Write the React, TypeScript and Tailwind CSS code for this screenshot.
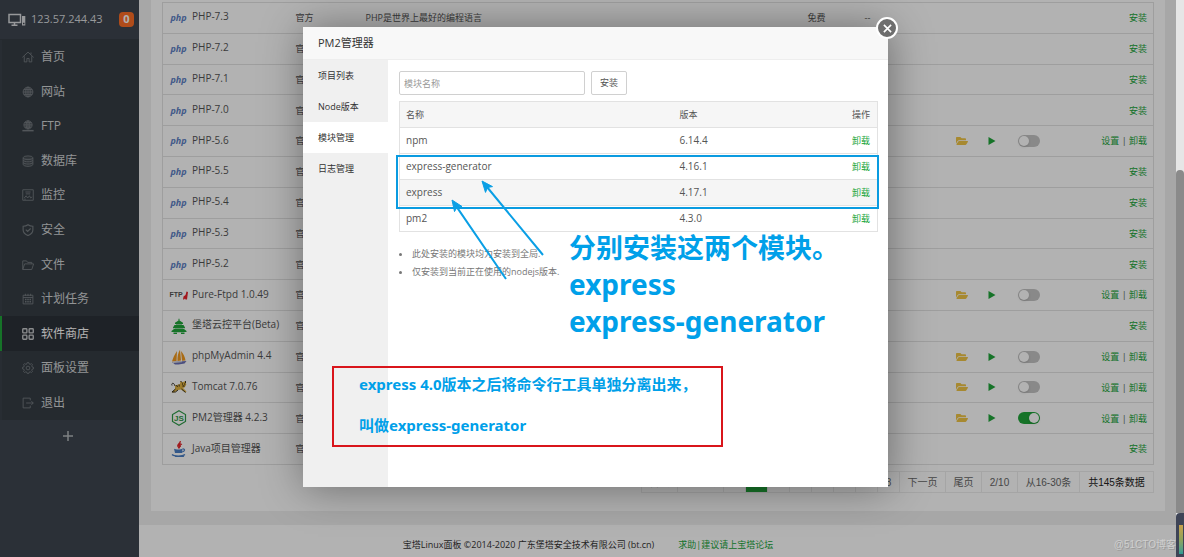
import type { ReactNode } from "react";
import { FaFolderOpen } from "react-icons/fa";

type IconName = "home" | "globe" | "ftp" | "db" | "monitor" | "shield" | "folder" | "calendar" | "apps" | "gear" | "exit";

const iconShapes: Record<IconName, ReactNode> = {
  home: <path d="M.5 8.500 8 1.500l7.500 7M3 7v7.500h3.500V10h3v4.500H13V7M12 4.500V2" />,
  globe: (
    <g>
      <circle cx="8" cy="8" r="6.500" fill="currentColor" fillOpacity=".25" />
      <ellipse cx="8" cy="8" rx="3" ry="6.500" />
      <path d="M1.500 8h13M8 1.500v13M2.500 4.700h11M2.500 11.300h11" />
    </g>
  ),
  ftp: (
    <g>
      <circle cx="8" cy="6.500" r="5.500" fill="currentColor" fillOpacity=".25" />
      <ellipse cx="8" cy="6.500" rx="2.500" ry="5.500" />
      <path d="M2.500 6.500h11M8 1v11M3.500 3.500h9M3.500 9.500h9" />
      <path d="M0.500 14.200h15" strokeWidth="2" />
    </g>
  ),
  db: (
    <g fill="currentColor" fillOpacity=".2">
      <path d="M1.500 4v8.500C2 16 14 16 14.500 12.500V4" />
      <ellipse cx="8" cy="3.700" rx="6.500" ry="2.500" />
      <path d="M1.500 7C3 9.700 13 9.700 14.500 7M1.500 10C3 12.700 13 12.700 14.500 10" fill="none" />
    </g>
  ),
  monitor: <path d="M1 1h14v14H1zM4.500 4h7M5 6.500h6M3 12l2.500-3 2 3L10 9l1.500 3 2-1.500M3 13.500h2" />,
  shield: <path d="M8 1c2 1.500 4 2 6.500 2v5c0 3.500-3 6-6.500 7.500C4.500 14 1.500 11.500 1.500 8V3C4 3 6 2.500 8 1zM5 7.500l2.500 2.500 4-4" strokeWidth="1.500" />,
  folder: <path d="M1 14V2.500h5L7.500 4.500H13V6.500M1 14 3.500 6.500h12L13 14z" />,
  calendar: (
    <g>
      <path d="M1.500 3h13v11.500h-13zM1.500 6h13M4.500 1v3M8 1v3M11.500 1v3" />
      <path d="M4 8.500h8M4 11.500h8" strokeDasharray="2 1" strokeWidth="2" />
    </g>
  ),
  apps: (
    <g strokeWidth="1.800">
      <rect x="1" y="1" width="5.500" height="5.500" rx="1" />
      <rect x="9.500" y="1" width="5.500" height="5.500" rx="1" />
      <rect x="1" y="9.500" width="5.500" height="5.500" rx="1" />
      <rect x="9.500" y="9.500" width="5.500" height="5.500" rx="1" />
    </g>
  ),
  gear: (
    <g>
      <path d="m6.700 1 .4-.3h1.800l.4 1.700 1.700.7 1.600-.9 1.300 1.300-.9 1.600.7 1.700 1.700.4v1.800l-1.700.4-.7 1.700.9 1.600-1.300 1.300-1.600-.9-1.700.7-.4 1.700H7.100l-.4-1.700-1.700-.7-1.600.9-1.300-1.300.9-1.600-.7-1.700-1.700-.4V7.200l1.700-.4.7-1.700-.9-1.600 1.300-1.300 1.600.9 1.700-.7z" />
      <circle cx="8" cy="8" r="2.500" />
    </g>
  ),
  exit: <path d="M11 4.500V1.500H1.500v13H11v-3M5.500 8H15M12.500 5.500 15 8l-2.500 2.500" />,
};

const menu: { label: string; icon: IconName }[] = [
  { label: "首页", icon: "home" },
  { label: "网站", icon: "globe" },
  { label: "FTP", icon: "ftp" },
  { label: "数据库", icon: "db" },
  { label: "监控", icon: "monitor" },
  { label: "安全", icon: "shield" },
  { label: "文件", icon: "folder" },
  { label: "计划任务", icon: "calendar" },
  { label: "软件商店", icon: "apps" },
  { label: "面板设置", icon: "gear" },
  { label: "退出", icon: "exit" },
];

function Sidebar() {
  return (
    <aside className="flex w-[139px] shrink-0 flex-col bg-[#3e454f]">
      <div className="flex h-[39px] items-center pl-2 pr-[5px] text-[#d8dadd]">
        <svg viewBox="0 0 18 14" className="h-[14px] w-[18px] shrink-0" fill="none" stroke="currentColor" strokeWidth="1.500">
          <path d="M1 1.500h11.500v8H1zM3.500 12.200h6" />
          <path d="M6.500 9.500v2.500" />
          <path d="M14 3h3.300v9.500H14z" fill="currentColor" stroke="none" />
          <path d="M15 10.500h1.500" stroke="#3e454f" />
        </svg>
        <span className="ml-[5px] text-[11px]">123.57.244.43</span>
        <span className="ml-auto flex h-[15px] w-[15px] items-center justify-center rounded bg-[#fc6d26] text-[11px] font-bold text-white">0</span>
      </div>
      <nav className="grid h-[381px] auto-rows-fr bg-[#353d44] pt-px">
        {menu.map((m) => {
          const active = m.icon === "apps";
          return (
            <a
              key={m.label}
              href="#"
              className={
                active
                  ? "flex items-center border-l-2 border-[#20a53a] bg-[#2c3138] pl-5 text-[12px] text-white"
                  : "flex items-center border-l-2 border-[#3a4149] pl-5 text-[12px] text-[#d2d4d6]"
              }
            >
              <svg
                viewBox="0 0 16 16"
                className={active ? "h-3 w-3 text-[#c8cacc]" : "h-3 w-3 text-[#767c81]"}
                fill="none"
                stroke="currentColor"
                strokeWidth="1.200"
              >
                {iconShapes[m.icon]}
              </svg>
              <span className="ml-[7px]">{m.label}</span>
            </a>
          );
        })}
      </nav>
      <button type="button" aria-label="添加" className="mt-[10px] flex justify-center pr-1 text-[#b4b8bc]">
        <svg viewBox="0 0 12 12" className="h-3 w-3" stroke="currentColor" strokeWidth="1.500">
          <path d="M6 1v10M1 6h10" />
        </svg>
      </button>
    </aside>
  );
}

type Kind = "php" | "ftp" | "tower" | "sail" | "cat" | "node" | "java";

function SoftIcon({ kind }: { kind: Kind }) {
  if (kind === "php") return <span className="text-[9px] font-bold italic text-[#5d7fc4]">php</span>;
  if (kind === "ftp")
    return (
      <span className="flex items-center font-['Liberation_Sans',sans-serif] text-[7px] font-bold leading-4 text-[#555]">
        FTP
        <svg viewBox="0 0 5 9" className="h-[9px] w-[5px] shrink-0" fill="#e8202a">
          <path d="M3.500.5 5 1 4 8.500H2.500L2 7.500l-1 1H0L.5 5.500 2.500 4z" />
        </svg>
      </span>
    );
  return (
    <svg viewBox="0 0 16 16" className="h-4 w-4" fill="none">
      {kind === "tower" && (
        <g fill="#20a53a">
          <path d="M7.500.8h1V2.500L12 4.700V6H4V4.700l3.500-2.200zM5 6.600h6v1H5zM3.500 7h9l1.500 2.500v.8H2v-.8zM4 10.800h8v.8H4zM3 11h10l2.500 2v1H.5v-1zM2.500 14.400h11V16H10v-1.200H6V16H2.500z" />
        </g>
      )}
      {kind === "sail" && (
        <g>
          <path d="M6 2C3.500 5.500 2 9 1 12.500L5.500 12zM9 .8C7 4 6.300 8 6.500 12l3.500-.5zM10 2c2.500 3 4 6 4.500 9.500l-3.500.3z" fill="#f29a1f" />
          <path d="M1 13 15.500 12 13.500 14.500l-6 1H4z" fill="#6b6fb5" />
          <path d="M2 13.500l9-.8" stroke="#ddd" />
        </g>
      )}
      {kind === "cat" && (
        <g>
          <path d="M4 6.500 9 5l.5-3 2 1.300L14.500 2l.8 3.500-1.500 2.800-1.800.7 3.500 3.500-1 1-4.500-3-3 .5-4 2.500-2.500-.3L4 10z" fill="#e0b23f" />
          <path d="M4 7C3 3 0 4 1 6.500M5.500 6l1 2M8 5.500l.3 2M4.500 10 1 13h3.500L7 11M10.500 10l4 3.500M9.500 2l1.500 1.500M14.500 2v2" stroke="#29251d" strokeWidth=".9" />
          <path d="M11 5h1M13.200 5h1M11.500 7h2" stroke="#111" />
        </g>
      )}
      {kind === "node" && (
        <g>
          <path d="M8 .8 14.500 4.500v7L8 15.200 1.500 11.500v-7z" stroke="#2f9a48" strokeWidth="1.200" />
          <text x="8" y="10.800" textAnchor="middle" fontSize="8" fill="#2f9a48" className="font-['Liberation_Sans',sans-serif] font-bold">
            JS
          </text>
        </g>
      )}
      {kind === "java" && (
        <g>
          <path d="M9 0c1.500 2-3.500 3-2 5.500L8 7C9.500 5.500 6.500 4.500 9.500 2M11 3C8.500 4 8.800 5 9.500 6" stroke="#e5252a" strokeWidth="1.300" />
          <path d="M3 7.800c2 1 6.500 1 8.500 0L11 12H4z" fill="#4a7fc4" />
          <path d="M11.500 8c3-.5 2.500 2.500-.5 3M1 13.500c2 2 10.500 2 13 0M4 15.500c3 .6 6 .6 9-.3" stroke="#4a7fc4" strokeWidth="1.200" />
        </g>
      )}
    </svg>
  );
}

const software: { name: string; kind: Kind; installed?: boolean; on?: boolean }[] = [
  { name: "PHP-7.3", kind: "php" },
  { name: "PHP-7.2", kind: "php" },
  { name: "PHP-7.1", kind: "php" },
  { name: "PHP-7.0", kind: "php" },
  { name: "PHP-5.6", kind: "php", installed: true },
  { name: "PHP-5.5", kind: "php" },
  { name: "PHP-5.4", kind: "php" },
  { name: "PHP-5.3", kind: "php" },
  { name: "PHP-5.2", kind: "php" },
  { name: "Pure-Ftpd 1.0.49", kind: "ftp", installed: true },
  { name: "堡塔云控平台(Beta)", kind: "tower" },
  { name: "phpMyAdmin 4.4", kind: "sail", installed: true },
  { name: "Tomcat 7.0.76", kind: "cat", installed: true },
  { name: "PM2管理器 4.2.3", kind: "node", installed: true, on: true },
  { name: "Java项目管理器", kind: "java" },
];

function SoftwareTable() {
  return (
    <table className="h-[463px] w-full table-fixed border-collapse border border-[#e2e2e2] text-[9px] text-[#555]">
      <colgroup>
        <col className="w-[133px]" />
        <col className="w-[70px]" />
        <col />
        <col className="w-[57px]" />
        <col className="w-[91px]" />
        <col className="w-[32px]" />
        <col className="w-[30px]" />
        <col className="w-[50px]" />
        <col className="w-[86px]" />
      </colgroup>
      <tbody>
        {software.map((s, i) => (
          <tr key={s.name} className="border-b border-[#e2e2e2]">
            <td className="p-0">
              <div className="flex items-center pl-[7px]">
                <span className="flex w-[17px] shrink-0 justify-center">
                  <SoftIcon kind={s.kind} />
                </span>
                <span className="ml-[5px] whitespace-nowrap pb-[3px] text-[10px] leading-4">{s.name}</span>
              </div>
            </td>
            <td className="p-0">官方</td>
            <td className="p-0">{i === 0 && "PHP是世界上最好的编程语言"}</td>
            <td className="p-0">{i === 0 && "免费"}</td>
            <td className="p-0">{i === 0 && "--"}</td>
            <td className="p-0">{s.installed && <FaFolderOpen className="h-3 w-3 text-[#efc445]" />}</td>
            <td className="p-0">
              {s.installed && (
                <svg viewBox="0 0 8 8" className="h-2 w-2" fill="#20a53a">
                  <path d="M0.500 0 7.500 4 .5 8z" />
                </svg>
              )}
            </td>
            <td className="p-0">
              {s.installed && (
                <button
                  type="button"
                  role="switch"
                  aria-checked={!!s.on}
                  aria-label={s.name}
                  className={
                    s.on
                      ? "flex h-3 w-[22px] items-center justify-end rounded-full bg-[#20a53a] px-px"
                      : "flex h-3 w-[22px] items-center rounded-full bg-[#c4c4c4] px-px"
                  }
                >
                  <span className="h-[10px] w-[10px] rounded-full bg-white shadow" />
                </button>
              )}
            </td>
            <td className="whitespace-nowrap p-0 pr-[6px] text-right text-[#555]">
              {s.installed ? (
                <>
                  <a href="#" className="text-[#20a53a]">设置</a> | <a href="#" className="text-[#20a53a]">卸载</a>
                </>
              ) : (
                <a href="#" className="text-[#20a53a]">安装</a>
              )}
            </td>
          </tr>
        ))}
      </tbody>
    </table>
  );
}

const pages: { text: string; width: string }[] = [
  { text: "首页", width: "w-[36px]" },
  { text: "上一页", width: "w-[46px]" },
  { text: "1", width: "w-[22px]" },
  { text: "2", width: "w-[22px]" },
  { text: "3", width: "w-[22px]" },
  { text: "4", width: "w-[22px]" },
  { text: "5", width: "w-[22px]" },
  { text: "6", width: "w-[22px]" },
  { text: "7", width: "w-[22px]" },
  { text: "8", width: "w-[22px]" },
  { text: "下一页", width: "w-[46px]" },
  { text: "尾页", width: "w-[36px]" },
  { text: "2/10", width: "w-[36px]" },
  { text: "从16-30条", width: "w-[62px]" },
  { text: "共145条数据", width: "w-[74px]" },
];

function Pagination() {
  return (
    <div className="mt-[6px] flex justify-end font-['Liberation_Sans','Noto_Sans_CJK_SC',sans-serif] text-[10px] text-[#666]">
      <div className="flex border-l border-[#ececec]">
        {pages.map((p) => (
          <span
            key={p.text}
            className={`${p.width} flex h-[22px] items-center justify-center border-y border-r border-[#ececec] ${
              p.text === "2" ? "bg-[#20a53a] text-white" : p.text.startsWith("共") ? "text-[#222]" : ""
            }`}
          >
            {p.text}
          </span>
        ))}
      </div>
    </div>
  );
}

const modules = [
  ["npm", "6.14.4"],
  ["express-generator", "4.16.1"],
  ["express", "4.17.1"],
  ["pm2", "4.3.0"],
];

function ManagerDialog() {
  return (
    <div role="dialog" aria-label="PM2管理器" className="relative flex h-[460px] w-[585px] flex-col bg-white text-[9px] text-[#555] shadow-[1px_1px_40px_rgba(0,0,0,0.4)]">
      <h2 className="flex h-[33px] items-center border-b border-[#eee] bg-[#f8f8f8] pl-[15px] text-[11px] text-[#333]">PM2管理器</h2>
      <button type="button" aria-label="关闭" className="absolute -right-[10px] -top-[10px] flex h-[22px] w-[22px] items-center justify-center rounded-full border-2 border-white bg-[#6e6e6e]">
        <svg viewBox="0 0 10 10" className="h-[9px] w-[9px]" stroke="#fff" strokeWidth="1.800">
          <path d="M1 1l8 8M9 1 1 9" />
        </svg>
      </button>
      <div className="flex flex-1">
        <nav className="flex w-[85px] flex-col bg-[#f0f0f0] text-[#333]">
          {["项目列表", "Node版本", "模块管理", "日志管理"].map((t) => (
            <a key={t} href="#" className={t === "模块管理" ? "flex h-[31px] items-center bg-white pl-[15px]" : "flex h-[31px] items-center pl-[15px]"}>
              {t}
            </a>
          ))}
        </nav>
        <div className="flex-1 pl-[11px] pr-[10px] pt-[11px]">
          <div className="flex gap-[6px]">
            <input aria-label="模块名称" placeholder="模块名称" className="h-6 w-[186px] rounded-xs border border-[#d0d0d0] px-1 placeholder:text-[#999]" />
            <button type="button" className="h-6 w-9 rounded-xs border border-[#d0d0d0]">安装</button>
          </div>
          <table className="mt-[6px] w-full table-fixed border-collapse border border-[#e2e2e2]">
            <colgroup>
              <col className="w-[274px]" />
              <col />
              <col className="w-[60px]" />
            </colgroup>
            <thead>
              <tr className="h-[26px] border-b border-[#e2e2e2] bg-[#f6f6f6]">
                <th className="p-0 pl-[6px] text-left font-normal">名称</th>
                <th className="p-0 pl-[6px] text-left font-normal">版本</th>
                <th className="p-0 pr-[7px] text-right font-normal">操作</th>
              </tr>
            </thead>
            <tbody>
              {modules.map(([name, version]) => (
                <tr key={name} className={name === "express" ? "h-[26px] border-b border-[#e2e2e2] bg-[#f5f5f5]" : "h-[26px] border-b border-[#e2e2e2]"}>
                  <td className="p-0 pl-[6px] text-[10px]">{name}</td>
                  <td className="p-0 pl-[6px] text-[10px]">{version}</td>
                  <td className="p-0 pr-[7px] text-right">
                    <a href="#" className="text-[#20a53a]">卸载</a>
                  </td>
                </tr>
              ))}
            </tbody>
          </table>
          <ul className="mt-[13px] list-disc pl-[13px] leading-[18px] text-[#777]">
            <li>此处安装的模块均为安装到全局.</li>
            <li>仅安装到当前正在使用的nodejs版本.</li>
          </ul>
        </div>
      </div>

      <svg viewBox="0 0 585 460" className="pointer-events-none absolute inset-0 h-full w-full" fill="none">
        <rect x="94" y="129" width="481" height="52" stroke="#0a9be0" strokeWidth="2" />
        <g stroke="#0a9fe5" strokeWidth="2">
          <path d="M240 228 184 160M203 252 153.500 179.600" />
        </g>
        <path d="M179 154 189.500 159.600 184.500 160.500 182.500 165.400zM149 173l10 6.500-5 .7-2.500 4.400z" fill="#0a9fe5" stroke="#0a9fe5" />
        <rect x="30" y="340" width="389" height="79" stroke="#d9151b" strokeWidth="2" />
      </svg>
      <div className="absolute left-[266px] top-[202px] whitespace-nowrap font-['Noto_Sans','Noto_Sans_CJK_SC',sans-serif] text-[28px] font-bold leading-[37px] text-[#00a0e9]">
        <p className="text-[27px]">分别安装这两个模块。</p>
        <p>express</p>
        <p>express-generator</p>
      </div>
      <p className="absolute left-[56px] top-[337px] whitespace-nowrap font-['Noto_Sans','Noto_Sans_CJK_SC',sans-serif] text-[15px] font-bold leading-[41px] text-[#00a0e9]">
        express 4.0版本之后将命令行工具单独分离出来，
        <br />
        叫做express-generator
      </p>
    </div>
  );
}

export default function App() {
  return (
    <div className="relative flex h-screen overflow-hidden bg-[#f0f0f0] font-['Open_Sans','Noto_Sans_CJK_SC',sans-serif]">
      <Sidebar />
      <div className="flex min-w-0 flex-1 flex-col">
        <main className="ml-3 mr-3 h-[511px] bg-white pl-[11px] pr-[11px] pt-[2px]">
          <SoftwareTable />
          <Pagination />
        </main>
        <footer className="mt-[14px] flex flex-1 items-center justify-center gap-6 bg-white pb-1 pt-3 pr-[140px] text-[9px] text-[#333]">
          <span>宝塔Linux面板 ©2014-2020 广东堡塔安全技术有限公司 (bt.cn)</span>
          <a href="#" className="text-[#20a53a]">求助|建议请上宝塔论坛</a>
        </footer>
      </div>
      <div className="w-[7px] shrink-0" />
      <div className="absolute inset-0 flex items-start justify-center bg-black/30 pl-[7px] pt-[27px]">
        <ManagerDialog />
      </div>
      <span className="absolute bottom-[5px] right-2 font-['Liberation_Sans','Noto_Sans_CJK_SC',sans-serif] text-[10px] leading-[14px] text-[#cfcfcf] text-shadow-[1px_1px_0_#999]">@51CTO博客</span>
      <div className="absolute inset-y-0 right-0 flex w-[8px] flex-col bg-[#e6e6e6]">
        <div className="mt-[170px] flex-1 rounded-t-full bg-[#8a8a8a]" />
        <div className="flex h-[44px] justify-end rounded-tl bg-[#3e4456] pt-3 pr-px pb-[3px]">
          <div className="w-1 bg-linear-to-b from-[#c9a04c] via-[#8fa35a] to-[#2c9c94]" />
        </div>
      </div>
    </div>
  );
}
